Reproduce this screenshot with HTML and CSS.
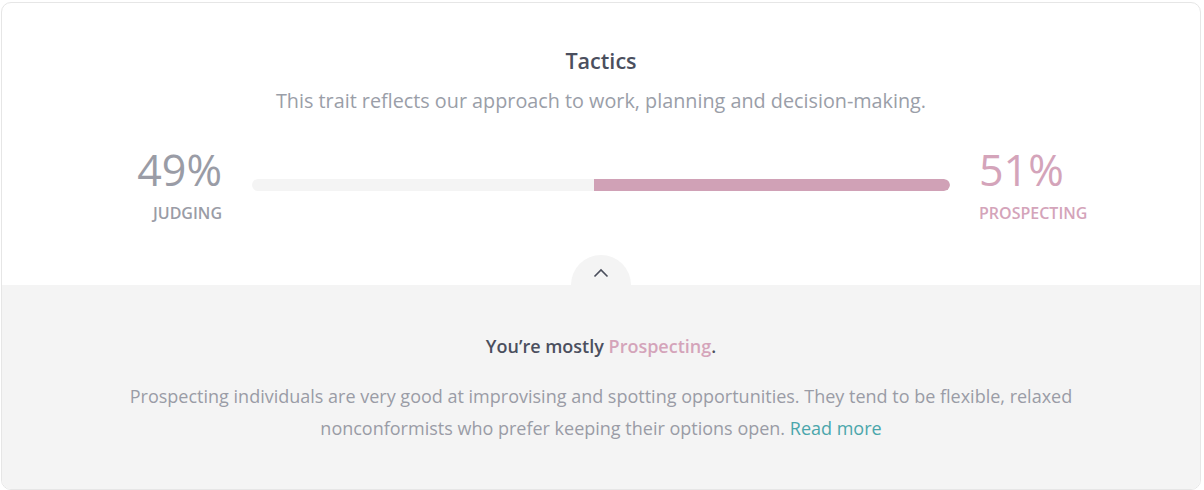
FILE: index.html
```
<!DOCTYPE html>
<html>
<head>
<meta charset="utf-8">
<link rel="stylesheet" href="styles.css">
</head>
<body>
<div class="card">
  <div class="top">
    <h2 class="title">Tactics</h2>
    <p class="subtitle">This trait reflects our approach to work, planning and decision-making.</p>
    <div class="scale">
      <div class="side left">
        <div class="pct">49%</div>
        <div class="label">Judging</div>
      </div>
      <div class="bar"><div class="fill" style="width:51%"></div></div>
      <div class="side right">
        <div class="pct">51%</div>
        <div class="label">Prospecting</div>
      </div>
    </div>
  </div>
  <div class="bottom">
    <div class="toggle">
      <svg width="16" height="10" viewBox="0 0 16 10"><path d="M1.5 8.5 L8 2 L14.5 8.5" fill="none" stroke="#4a4e5c" stroke-width="1.6"/></svg>
    </div>
    <p class="mostly">You’re mostly <span class="pink">Prospecting</span>.</p>
    <p class="desc">Prospecting individuals are very good at improvising and spotting opportunities. They tend to be flexible, relaxed nonconformists who prefer keeping their options open. <a class="more" href="#">Read more</a></p>
  </div>
</div>
</body>
</html>
```
FILE: styles.css
```
* { box-sizing: border-box; }
html, body { margin: 0; padding: 0; background: #fff; }
body { padding: 2px 2px 0 1px; font-family: "Open Sans", "Liberation Sans", sans-serif; }
.card {
  width: 1200px;
  height: 488px;
  border: 1px solid #e6e6e6;
  border-radius: 10px;
  overflow: hidden;
  display: flex;
  flex-direction: column;
}
.top {
  height: 282px;
  padding-top: 43px;
  text-align: center;
}
.title {
  margin: 0;
  font-size: 21.6px;
  font-weight: 600;
  color: #4b4f5e;
  line-height: 30px;
}
.subtitle {
  margin: 11px 0 0;
  font-size: 19.8px;
  color: #9a9ea8;
  line-height: 28px;
}
.scale {
  display: grid;
  grid-template-columns: 1fr 698px 1fr;
  column-gap: 30px;
  margin-top: 28px;
}
.side { display: flex; flex-direction: column; }
.side.left { align-items: flex-end; }
.side.right { align-items: flex-start; margin-left: -1px; }
.pct {
  font-size: 43px;
  line-height: 54px;
  color: #9a9ca6;
}
.right .pct, .right .label { color: #d4a4ba; }
.label {
  font-size: 16px;
  font-weight: 600;
  text-transform: uppercase;
  color: #9a9ca6;
  line-height: 22px;
  margin-top: 5px;
}
.bar {
  margin-top: 36px;
  height: 12px;
  border-radius: 6px;
  background: #f4f4f4;
  display: flex;
  justify-content: flex-end;
  overflow: hidden;
}
.fill {
  height: 100%;
  background: #d0a1b6;
  border-radius: 0 6px 6px 0;
}
.bottom {
  flex: 1;
  background: #f4f4f4;
  position: relative;
  text-align: center;
  padding-top: 49px;
}
.toggle {
  position: absolute;
  left: 569px;
  top: -30px;
  width: 60px;
  height: 60px;
  border-radius: 50%;
  background: #f4f4f4;
  display: flex;
  justify-content: center;
  padding-top: 13px;
}
.toggle svg { display: block; }
.mostly {
  position: relative;
  margin: 0;
  font-size: 18px;
  font-weight: 600;
  color: #4b4f5e;
  line-height: 24px;
}
.pink { color: #d4a4ba; }
.desc {
  margin: 22px auto 0;
  width: 1000px;
  font-size: 18px;
  line-height: 32px;
  color: #9a9ca6;
}
.more { color: #4aa6ab; text-decoration: none; }
```
